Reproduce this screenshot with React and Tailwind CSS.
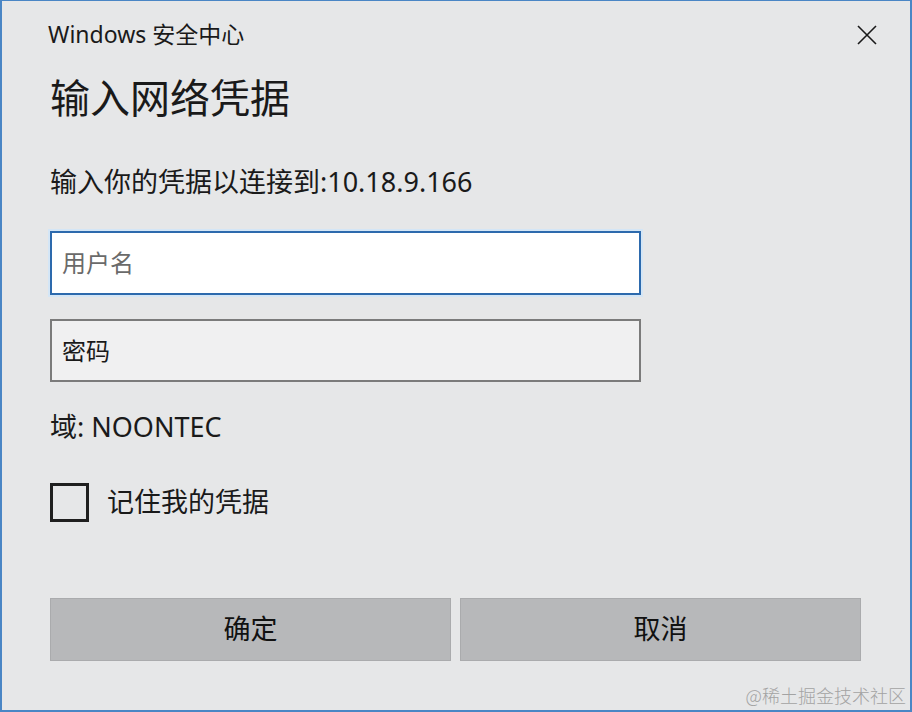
import React from "react";

export default function App() {
  const font = { fontFamily: '"Noto Sans", "Noto Sans CJK SC", sans-serif' };
  return (
    <div
      className="relative w-[912px] h-[712px] bg-[#e6e7e8] border-l-2 border-r-2 border-t border-b-2 border-[#4a86c5] flex flex-col text-[#1a1a1a] overflow-hidden"
      style={font}
    >
      <div className="flex items-center justify-between pl-[46px] pr-[33px] mt-[17px] h-[32px]">
        <div className="text-[23px] leading-[32px]">Windows 安全中心</div>
        <svg width="20" height="20" viewBox="0 0 20 20" className="mt-[1px]">
          <path d="M1 1 L19 19 M19 1 L1 19" stroke="#1a1a1a" strokeWidth="1.6" fill="none" />
        </svg>
      </div>

      <div className="pl-[48px] flex flex-col">
        <div className="mt-[24px] text-[40px] leading-[48px]">输入网络凭据</div>

        <div className="mt-[42px] text-[27px] leading-[36px]">输入你的凭据以连接到:10.18.9.166</div>

        <div className="mt-[31px] w-[591px] h-[64px] bg-white border-2 border-[#2d6aad] shadow-[0_0_0_2px_#d4e6f6] flex items-center pl-[10px] text-[24px] text-[#6a6a6a]">
          用户名
        </div>

        <div className="mt-[24px] w-[591px] h-[63px] bg-[#f0f0f1] border-2 border-[#7b7b7b] flex items-center pl-[10px] text-[24px] text-[#1a1a1a]">
          密码
        </div>

        <div className="mt-[27px] text-[27px] leading-[36px]">域: NOONTEC</div>

        <div className="mt-[37px] flex items-center h-[40px]">
          <div className="w-[39px] h-[39px] border-[3px] border-[#1f1f1f]" />
          <div className="ml-[18px] text-[27px] leading-[36px]">记住我的凭据</div>
        </div>

        <div className="mt-[76px] flex gap-[9px]">
          <div className="w-[401px] h-[63px] bg-[#b7b8ba] border border-[#aaabad] flex items-center justify-center text-[27px] text-[#111]">
            确定
          </div>
          <div className="w-[401px] h-[63px] bg-[#b7b8ba] border border-[#aaabad] flex items-center justify-center text-[27px] text-[#111]">
            取消
          </div>
        </div>
      </div>

      <div className="absolute right-[4px] bottom-[3px] text-[18px] leading-[24px] text-[#a3a3a3]" style={{ fontFamily: '"Noto Sans CJK SC", sans-serif', fontWeight: 300 }}>
        @稀土掘金技术社区
      </div>
    </div>
  );
}
